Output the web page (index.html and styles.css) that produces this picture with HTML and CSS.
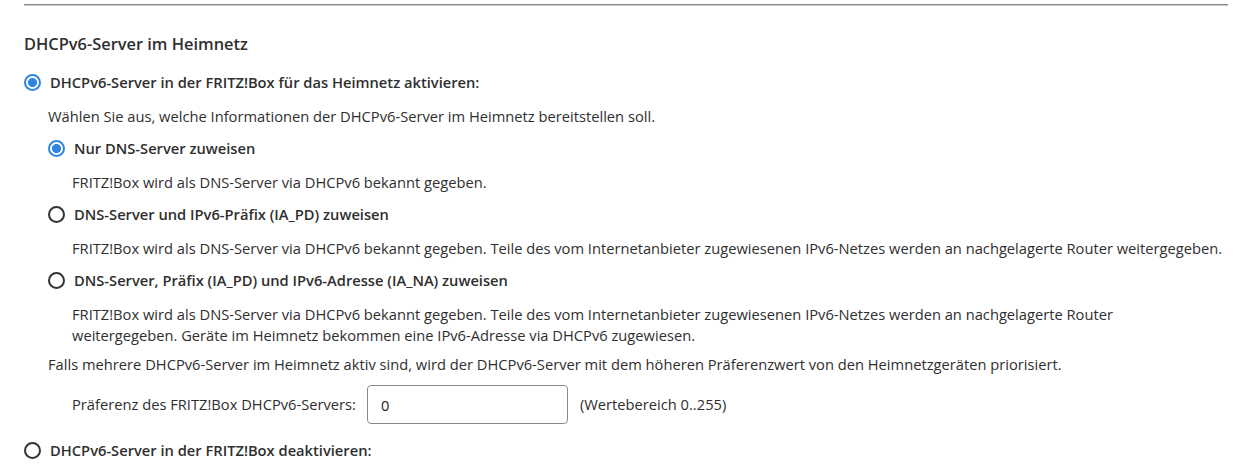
FILE: index.html
```html
<!DOCTYPE html>
<html lang="de">
<head>
    <meta charset="UTF-8">
    <meta name="viewport" content="width=device-width, initial-scale=1.0">
    <title>DHCPv6-Server im Heimnetz</title>
    <link rel="stylesheet" href="styles.css">
</head>
<body>
    <div class="page">
        <hr class="separator">

        <h2 class="section-title">DHCPv6-Server im Heimnetz</h2>

        <!-- DHCPv6-Server aktivieren -->
        <label class="radio">
            <input type="radio" name="dhcpv6" checked>
            <span>DHCPv6-Server in der FRITZ!Box für das Heimnetz aktivieren:</span>
        </label>

        <div class="group">
            <p class="hint">Wählen Sie aus, welche Informationen der DHCPv6-Server im Heimnetz bereitstellen soll.</p>

            <div class="options">
                <label class="radio">
                    <input type="radio" name="dhcpv6_mode" checked>
                    <span>Nur DNS-Server zuweisen</span>
                </label>
                <p class="desc">FRITZ!Box wird als DNS-Server via DHCPv6 bekannt gegeben.</p>

                <label class="radio">
                    <input type="radio" name="dhcpv6_mode">
                    <span>DNS-Server und IPv6-Präfix (IA_PD) zuweisen</span>
                </label>
                <p class="desc">FRITZ!Box wird als DNS-Server via DHCPv6 bekannt gegeben. Teile des vom Internetanbieter zugewiesenen IPv6-Netzes werden an nachgelagerte Router weitergegeben.</p>

                <label class="radio">
                    <input type="radio" name="dhcpv6_mode">
                    <span>DNS-Server, Präfix (IA_PD) und IPv6-Adresse (IA_NA) zuweisen</span>
                </label>
                <p class="desc">FRITZ!Box wird als DNS-Server via DHCPv6 bekannt gegeben. Teile des vom Internetanbieter zugewiesenen IPv6-Netzes werden an nachgelagerte Router<br>weitergegeben. Geräte im Heimnetz bekommen eine IPv6-Adresse via DHCPv6 zugewiesen.</p>
            </div>

            <p class="hint hint-tight">Falls mehrere DHCPv6-Server im Heimnetz aktiv sind, wird der DHCPv6-Server mit dem höheren Präferenzwert von den Heimnetzgeräten priorisiert.</p>

            <div class="field">
                <label for="dhcpv6_pref">Präferenz des FRITZ!Box DHCPv6-Servers:</label>
                <input type="text" id="dhcpv6_pref" value="0">
                <span class="range">(Wertebereich 0..255)</span>
            </div>
        </div>

        <!-- DHCPv6-Server deaktivieren -->
        <label class="radio radio-last">
            <input type="radio" name="dhcpv6">
            <span>DHCPv6-Server in der FRITZ!Box deaktivieren:</span>
        </label>
    </div>
</body>
</html>
```
FILE: styles.css
```css
body {
    margin: 0;
    background-color: #fff;
    color: #2f2f2f;
    font-family: 'Open Sans', 'Liberation Sans', sans-serif;
    font-size: 14.7px;
    line-height: 21px;
}
.page {
    padding: 0 17px 0 24px;
}
.separator {
    margin: 4px 0 0;
    border: none;
    border-top: 1px solid #888;
    border-bottom: 1px solid #c8c8c8;
    height: 0;
}
.section-title {
    margin: 27px 0 0;
    font-size: 16.4px;
    font-weight: 600;
    line-height: 21px;
}
.radio {
    display: flex;
    align-items: center;
    gap: 9px;
    margin-top: 18px;
    font-weight: 600;
    height: 21px;
}
.radio input {
    appearance: none;
    -webkit-appearance: none;
    margin: 0;
    width: 17px;
    height: 17px;
    border: 2px solid #333;
    border-radius: 50%;
    background-color: #fff;
    flex-shrink: 0;
}
.radio input:checked {
    border-color: #2f86e2;
    background: radial-gradient(circle, #2f86e2 0 4.2px, #fff 4.8px);
}
.group {
    padding-left: 24px;
}
.hint {
    margin: 13px 0 0;
}
.options .radio {
    margin-top: 11px;
}
.options .desc {
    margin: 13px 0 0 24px;
}
.hint-tight {
    margin-top: 8px;
}
.field {
    display: flex;
    align-items: center;
    gap: 11px;
    margin: 10px 0 0 24px;
}
.field input {
    width: 201px;
    height: 39px;
    box-sizing: border-box;
    padding: 0 13px;
    border: 1px solid #8a8a8a;
    border-radius: 4px;
    font-family: inherit;
    font-size: 14.7px;
    color: #222;
}
.range {
    margin-left: 1px;
}
.radio-last {
    margin-top: 16px;
}
```
